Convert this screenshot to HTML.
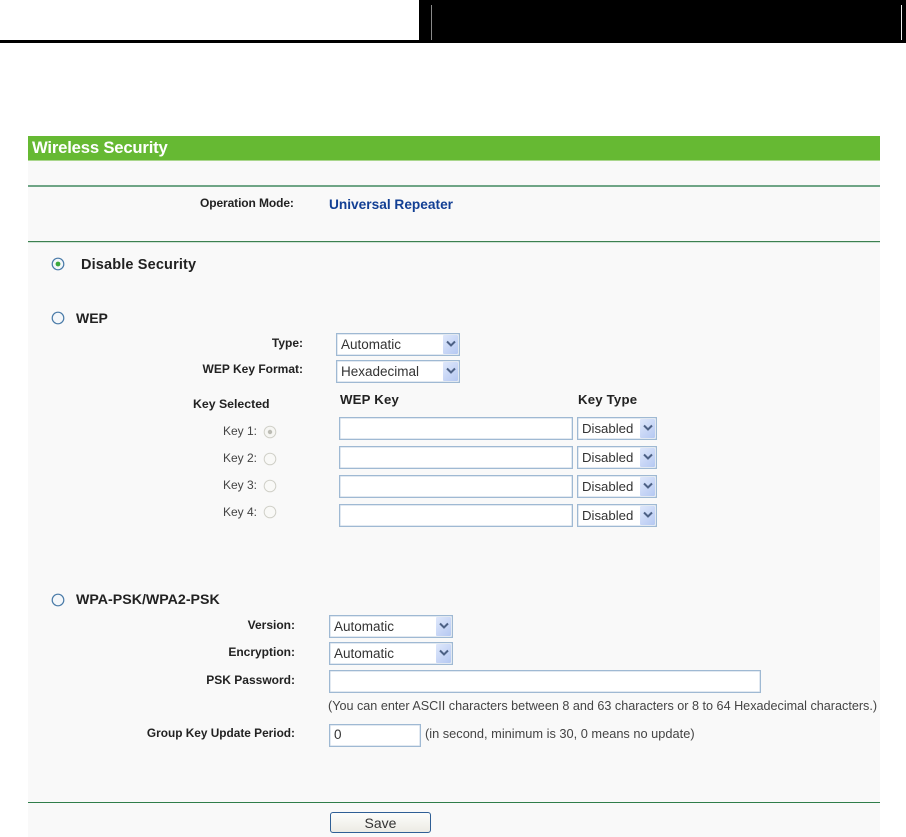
<!DOCTYPE html>
<html><head><meta charset="utf-8"><style>
html,body{margin:0;padding:0;background:#fff;width:906px;height:837px;overflow:hidden}
body{position:relative;font-family:"Liberation Sans",Arial,sans-serif;color:#222}
div,svg{position:absolute}
.t{white-space:nowrap;font-size:12px;line-height:16px;filter:blur(.3px)}
.b{font-weight:bold;color:#222}
.r{text-align:right}
.n{color:#444}
.in{box-sizing:border-box;background:#fff;border:1px solid #9fb9d3;box-shadow:inset 0 0 0 .5px #c4d3e3;height:23px}
.sel .tx{position:absolute;left:4px;top:3px;font-size:13.5px;line-height:16px;color:#333;white-space:nowrap;filter:blur(.3px)}
.sel .tx.d{font-size:13.2px}
.sel .ar{position:absolute;right:1px;top:1px;bottom:1px;width:15px;background:linear-gradient(135deg,#dfe8fb,#b5c8f2);border-radius:1px}
.sel svg{left:2.5px;top:5px}
</style></head><body>
<div style="left:0;top:40px;width:906px;height:3px;background:#000"></div>
<div style="left:419px;top:0;width:487px;height:43px;background:#000"></div>
<div style="left:431px;top:5px;width:1px;height:35px;background:#8a8a8a"></div>
<div style="left:901px;top:5px;width:1px;height:35px;background:#eee"></div>

<div style="left:28px;top:136px;width:852px;height:701px;background:#f9f9f9"></div>
<div style="left:28px;top:136px;width:852px;height:24px;background:#66b933"></div>
<div style="left:28px;top:160px;width:852px;height:1px;background:#a9d68c"></div>
<div style="left:28px;top:185px;width:852px;height:2px;background:#6fa586"></div>
<div style="left:28px;top:241px;width:852px;height:1px;background:#3c8050"></div>
<div style="left:28px;top:242px;width:852px;height:1px;background:#cfe3d6"></div>
<div style="left:28px;top:802px;width:852px;height:1px;background:#2f7d4a"></div>

<div class="t" style="left:32px;top:139px;font-size:16.7px;line-height:18px;font-weight:bold;color:#fff;letter-spacing:-.2px">Wireless Security</div>
<div class="t b" style="left:200px;top:195px;letter-spacing:-.1px">Operation Mode:</div>
<div class="t" style="left:329px;top:197px;font-size:13.7px;font-weight:bold;color:#123f94">Universal Repeater</div>

<svg style="left:51px;top:257px" width="14" height="14"><circle cx="7" cy="7" r="5.8" fill="#f4f7fa" stroke="#4a7ba8" stroke-width="1.2"/><circle cx="7" cy="7" r="2.4" fill="#3ca83c"/></svg>
<div class="t b" style="left:81px;top:257px;font-size:14.5px;letter-spacing:.15px">Disable Security</div>

<svg style="left:51px;top:311px" width="14" height="14"><circle cx="7" cy="7" r="5.8" fill="#f4f7fa" stroke="#4a7ba8" stroke-width="1.2"/></svg>
<div class="t b" style="left:76px;top:310px;font-size:14px">WEP</div>

<div class="t b r" style="right:603px;top:335px">Type:</div>
<div class="t b r" style="right:603px;top:361px">WEP Key Format:</div>
<div class="t b" style="left:193px;top:396px;font-size:12.3px">Key Selected</div>
<div class="t b" style="left:340px;top:392px;font-size:13.2px;letter-spacing:.2px">WEP Key</div>
<div class="t b" style="left:578px;top:392px;font-size:13.2px;letter-spacing:.2px">Key Type</div>

<div class="in sel" style="left:336px;top:333px;width:124px"><div class="tx">Automatic</div><div class="ar"><svg width="10" height="8"><path d="M1 1.5L5 5.5L9 1.5" fill="none" stroke="#4d6185" stroke-width="2"/></svg></div></div>
<div class="in sel" style="left:336px;top:360px;width:124px"><div class="tx">Hexadecimal</div><div class="ar"><svg width="10" height="8"><path d="M1 1.5L5 5.5L9 1.5" fill="none" stroke="#4d6185" stroke-width="2"/></svg></div></div>

<div class="t n" style="left:223px;top:423px">Key 1:</div>
<div class="t n" style="left:223px;top:450px">Key 2:</div>
<div class="t n" style="left:223px;top:477px">Key 3:</div>
<div class="t n" style="left:223px;top:504px">Key 4:</div>
<svg style="left:263px;top:425px" width="14" height="14"><circle cx="7" cy="7" r="5.8" fill="#f6f6f3" stroke="#d0d0c8"/><circle cx="7" cy="7" r="2.2" fill="#bcbcb4"/></svg>
<svg style="left:263px;top:452px" width="14" height="14"><circle cx="7" cy="7" r="5.8" fill="#f9f9f7" stroke="#d0d0c8"/></svg>
<svg style="left:263px;top:479px" width="14" height="14"><circle cx="7" cy="7" r="5.8" fill="#f9f9f7" stroke="#d0d0c8"/></svg>
<svg style="left:263px;top:505px" width="14" height="14"><circle cx="7" cy="7" r="5.8" fill="#f9f9f7" stroke="#d0d0c8"/></svg>

<div class="in" style="left:339px;top:417px;width:234px"></div>
<div class="in" style="left:339px;top:446px;width:234px"></div>
<div class="in" style="left:339px;top:475px;width:234px"></div>
<div class="in" style="left:339px;top:504px;width:234px"></div>
<div class="in sel" style="left:577px;top:417px;width:80px"><div class="tx d">Disabled</div><div class="ar"><svg width="10" height="8"><path d="M1 1.5L5 5.5L9 1.5" fill="none" stroke="#4d6185" stroke-width="2"/></svg></div></div>
<div class="in sel" style="left:577px;top:446px;width:80px"><div class="tx d">Disabled</div><div class="ar"><svg width="10" height="8"><path d="M1 1.5L5 5.5L9 1.5" fill="none" stroke="#4d6185" stroke-width="2"/></svg></div></div>
<div class="in sel" style="left:577px;top:475px;width:80px"><div class="tx d">Disabled</div><div class="ar"><svg width="10" height="8"><path d="M1 1.5L5 5.5L9 1.5" fill="none" stroke="#4d6185" stroke-width="2"/></svg></div></div>
<div class="in sel" style="left:577px;top:504px;width:80px"><div class="tx d">Disabled</div><div class="ar"><svg width="10" height="8"><path d="M1 1.5L5 5.5L9 1.5" fill="none" stroke="#4d6185" stroke-width="2"/></svg></div></div>

<svg style="left:51px;top:593px" width="14" height="14"><circle cx="7" cy="7" r="5.8" fill="#f4f7fa" stroke="#4a7ba8" stroke-width="1.2"/></svg>
<div class="t b" style="left:76px;top:592px;font-size:14.2px">WPA-PSK/WPA2-PSK</div>

<div class="t b r" style="right:611px;top:617px">Version:</div>
<div class="t b r" style="right:611px;top:644px">Encryption:</div>
<div class="t b r" style="right:611px;top:672px">PSK Password:</div>
<div class="t b r" style="right:611px;top:725px;font-size:11.85px">Group Key Update Period:</div>

<div class="in sel" style="left:329px;top:615px;width:124px"><div class="tx">Automatic</div><div class="ar"><svg width="10" height="8"><path d="M1 1.5L5 5.5L9 1.5" fill="none" stroke="#4d6185" stroke-width="2"/></svg></div></div>
<div class="in sel" style="left:329px;top:642px;width:124px"><div class="tx">Automatic</div><div class="ar"><svg width="10" height="8"><path d="M1 1.5L5 5.5L9 1.5" fill="none" stroke="#4d6185" stroke-width="2"/></svg></div></div>
<div class="in" style="left:329px;top:670px;width:432px"></div>
<div class="t n" style="left:328px;top:698px;font-size:12.62px">(You can enter ASCII characters between 8 and 63 characters or 8 to 64 Hexadecimal characters.)</div>
<div class="in" style="left:329px;top:724px;width:92px"></div>
<div class="t" style="left:334px;top:727px;font-size:13.5px;color:#333">0</div>
<div class="t n" style="left:425px;top:726px;font-size:12.8px">(in second, minimum is 30, 0 means no update)</div>

<div style="left:330px;top:812px;width:101px;height:21px;box-sizing:border-box;border:1.5px solid #2f5f95;border-radius:3px;background:linear-gradient(#fdfdfb,#ecebe4);text-align:center;font-size:14px;line-height:20px;color:#333">Save</div>
</body></html>
